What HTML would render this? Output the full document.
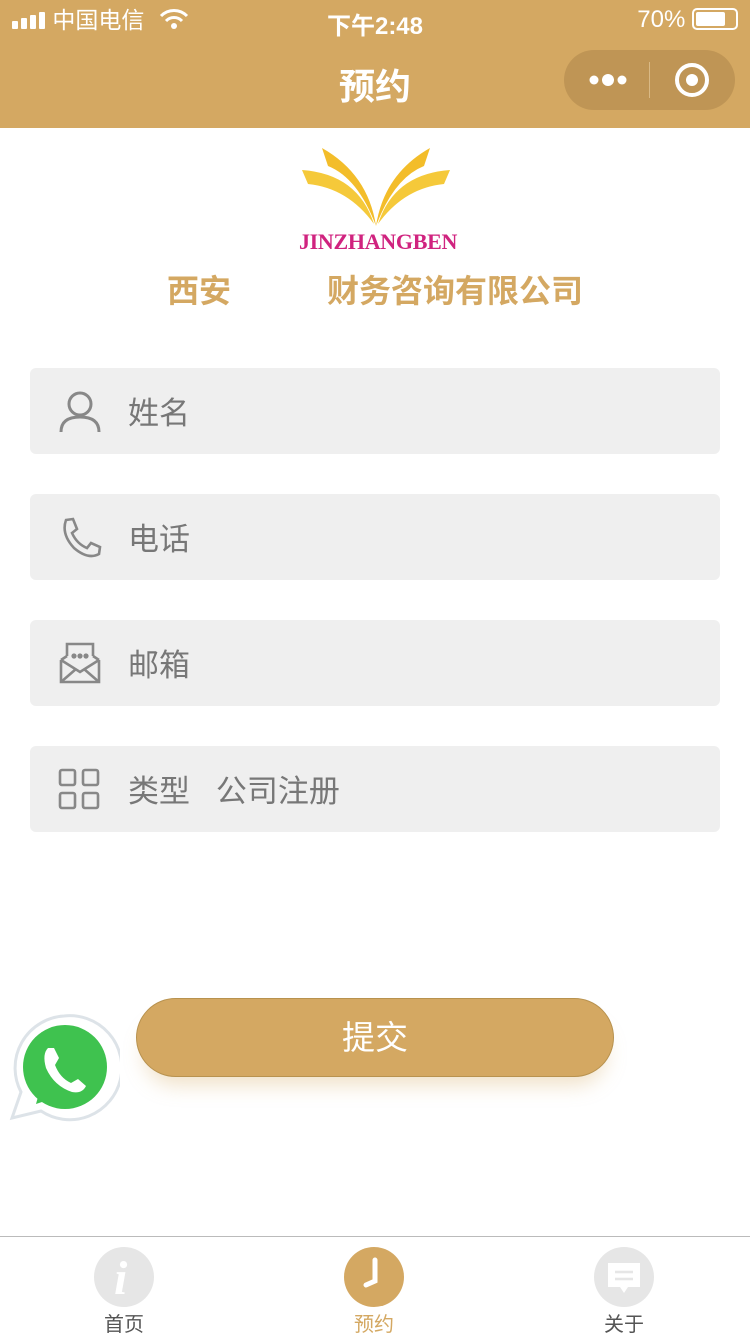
<!DOCTYPE html><html><head><meta charset="utf-8"><style>
*{margin:0;padding:0;box-sizing:border-box}
body{width:750px;height:1334px;position:relative;background:#fff;font-family:"Liberation Sans","Noto Sans CJK SC",sans-serif;overflow:hidden}
.hdr{position:absolute;top:0;left:0;width:750px;height:128px;background:#d4a862;color:#fff}
.abs{position:absolute}
.field{position:absolute;left:30px;width:690px;height:86px;background:#efefef;border-radius:6px}
.field span{position:absolute;left:98px;top:20px;font-size:31px;color:#777}
.field svg{position:absolute;left:28px;top:22px}
.tab{position:absolute;top:1247px;width:60px;height:60px;border-radius:50%}
.tl{position:absolute;top:1308px;font-size:20px;color:#555;width:80px;text-align:center}
</style></head><body>
<div class="hdr">
 <div class="abs" style="left:12px;top:5px;font-size:23px;line-height:30px;white-space:nowrap">
  <svg width="34" height="18" style="vertical-align:-1px"><rect x="0" y="10" width="6" height="8" rx="1" fill="#fff"/><rect x="9" y="7" width="6" height="11" rx="1" fill="#fff"/><rect x="18" y="4" width="6" height="14" rx="1" fill="#fff"/><rect x="27" y="1" width="6" height="17" rx="1" fill="#fff"/></svg> 中国电信
  <svg width="30" height="22" style="vertical-align:-2px;margin-left:8px"><path d="M2 8 A18 18 0 0 1 28 8" stroke="#fff" stroke-width="3" fill="none"/><path d="M7 13 A11 11 0 0 1 23 13" stroke="#fff" stroke-width="3" fill="none"/><circle cx="15" cy="18" r="3" fill="#fff"/></svg>
 </div>
 <div class="abs" style="left:0;width:750px;text-align:center;top:6px;font-size:24px;font-weight:bold">下午2:48</div>
 <div class="abs" style="right:12px;top:6px;font-size:24px">70% <span style="display:inline-block;width:46px;height:22px;border:2px solid #fff;border-radius:5px;vertical-align:-3px;position:relative"><span style="position:absolute;left:2px;top:2px;width:29px;height:14px;background:#fff;border-radius:2px"></span></span></div>
 <div class="abs" style="left:0;width:750px;text-align:center;top:58px;font-size:36px;font-weight:bold">预约</div>
 <div class="abs" style="left:564px;top:50px;width:171px;height:60px;border-radius:30px;background:#bf9555">
  <div class="abs" style="left:24px;top:22px;"><svg width="40" height="16"><circle cx="6" cy="8" r="4.5" fill="#fff"/><circle cx="20" cy="8" r="6" fill="#fff"/><circle cx="34" cy="8" r="4.5" fill="#fff"/></svg></div>
  <div class="abs" style="left:85px;top:12px;width:1px;height:36px;background:#d9b985"></div>
  <div class="abs" style="left:111px;top:13px;width:34px;height:34px;border:4px solid #fff;border-radius:50%"><div class="abs" style="left:7px;top:7px;width:12px;height:12px;background:#fff;border-radius:50%"></div></div>
 </div>
</div>
<svg class="abs" style="left:298px;top:144px" width="156" height="86">
 <path d="M4 26 Q60 30 76 80 Q50 44 10 40 Z" fill="#f5c93a"/>
 <path d="M24 4 Q70 30 78 82 Q60 34 30 22 Z" fill="#f3bd2a"/>
 <path d="M152 26 Q96 30 80 80 Q106 44 146 40 Z" fill="#f5c93a"/>
 <path d="M132 4 Q86 30 78 82 Q96 34 126 22 Z" fill="#f3bd2a"/>
</svg>
<div class="abs" style="left:293px;top:229px;width:170px;text-align:center;font-family:'Liberation Serif',serif;font-weight:bold;font-size:22px;color:#d0237f;letter-spacing:-0.3px">JINZHANGBEN</div>
<div class="abs" style="left:167px;top:266px;font-size:32px;font-weight:bold;color:#d4a862">西安</div>
<div class="abs" style="left:327px;top:266px;font-size:32px;font-weight:bold;color:#d4a862">财务咨询有限公司</div>

<div class="field" style="top:368px"><svg width="44" height="44" fill="none" stroke="#888" stroke-width="3"><circle cx="22" cy="14" r="11"/><path d="M3 42 Q3 27 22 27 Q41 27 41 42"/></svg><span>姓名</span></div>
<div class="field" style="top:494px"><svg width="44" height="44" fill="none" stroke="#888" stroke-width="2.6"><path d="M8 4 L15 3 L19 13 L14 17 Q19 28 29 32 L33 27 L42 31 L41 38 Q30 44 16 32 Q3 18 8 4 Z"/></svg><span>电话</span></div>
<div class="field" style="top:620px"><svg width="44" height="44" fill="none" stroke="#888" stroke-width="2.6"><path d="M3 18 L3 40 L41 40 L41 18"/><path d="M9 14 L9 2 L35 2 L35 14"/><path d="M3 18 L22 30 L41 18 M9 14 L3 18 M35 14 L41 18 M3 40 L18 27 M41 40 L26 27"/><circle cx="16" cy="14" r="1.3" fill="#888"/><circle cx="22" cy="14" r="1.3" fill="#888"/><circle cx="28" cy="14" r="1.3" fill="#888"/></svg><span>邮箱</span></div>
<div class="field" style="top:746px"><svg width="44" height="44" fill="none" stroke="#888" stroke-width="2.6"><rect x="2" y="2" width="15" height="15" rx="2"/><rect x="25" y="2" width="15" height="15" rx="2"/><rect x="2" y="25" width="15" height="15" rx="2"/><rect x="25" y="25" width="15" height="15" rx="2"/></svg><span>类型&nbsp;&nbsp; 公司注册</span></div>

<div class="abs" style="left:136px;top:998px;width:478px;height:79px;border-radius:40px;background:#d4a862;border:1px solid #b8924f;box-shadow:0 16px 20px -8px rgba(212,168,98,.35);color:#fff;font-size:33px;text-align:center;line-height:77px">提交</div>

<svg class="abs" style="left:8px;top:1012px" width="112" height="110">
 <path d="M56 4 A52 52 0 1 1 33 99 L4 106 L13 80 A52 52 0 0 1 56 4 Z" fill="#fff" stroke="#dde3e8" stroke-width="3"/>
 <circle cx="57" cy="55" r="42" fill="#3fc24f"/>
 <path d="M28 92 L33 74 L46 86 Z" fill="#3fc24f"/>
 <path d="M40 36 Q34 42 38 56 Q46 74 64 80 Q74 82 78 74 L70 67 L63 71 Q52 66 47 53 L51 46 L46 36 Z" fill="#fff"/>
</svg>

<div class="abs" style="left:0;top:1236px;width:750px;height:1px;background:#bbb"></div>
<div class="tab" style="left:94px;background:#e6e6e6"><div class="abs" style="left:20px;top:4px;font-family:'Liberation Serif',serif;font-style:italic;font-weight:bold;font-size:48px;color:#fff">i</div></div>
<div class="tab" style="left:344px;background:#d4a862"><svg width="60" height="60"><path d="M31 13 L31 34 L22 38" stroke="#fff" stroke-width="5" stroke-linecap="round" fill="none"/></svg></div>
<div class="tab" style="left:594px;background:#e6e6e6"><svg width="60" height="60"><path d="M14 16 L46 16 L46 40 L34 40 L30 46 L26 40 L14 40 Z" fill="#fff"/><path d="M21 25 L39 25 M21 32 L39 32" stroke="#e6e6e6" stroke-width="2.5"/></svg></div>
<div class="tl" style="left:84px">首页</div>
<div class="tl" style="left:334px;color:#d4a862">预约</div>
<div class="tl" style="left:584px">关于</div>
</body></html>
